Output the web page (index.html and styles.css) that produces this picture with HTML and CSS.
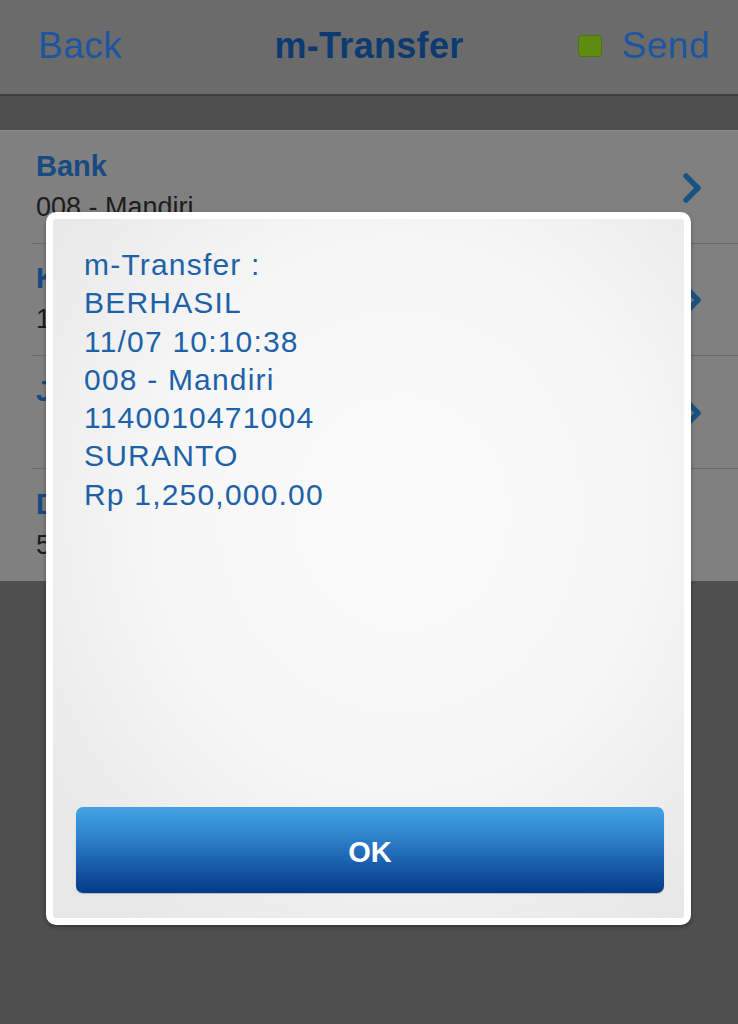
FILE: index.html
```html
<!DOCTYPE html>
<html>
<head>
<meta charset="utf-8">
<link rel="stylesheet" href="styles.css">
</head>
<body>
<div class="app">
  <header class="nav">
    <span class="nav-back">Back</span>
    <span class="nav-title">m-Transfer</span>
    <span class="nav-send"><span class="dot"></span>Send</span>
  </header>
  <div class="band"></div>
  <ul class="list">
    <li class="row">
      <div class="cell"><div class="label">Bank</div><div class="value">008 - Mandiri</div></div>
      <svg class="chev" width="24" height="32" viewBox="0 0 24 32"><polyline points="6,4 18,16 6,28" fill="none" stroke="#1b5380" stroke-width="5.5" stroke-linecap="round" stroke-linejoin="round"/></svg>
    </li>
    <li class="row">
      <div class="cell"><div class="label">Ke Rekening</div><div class="value">1140010471004</div></div>
      <svg class="chev" width="24" height="32" viewBox="0 0 24 32"><polyline points="6,4 18,16 6,28" fill="none" stroke="#1b5380" stroke-width="5.5" stroke-linecap="round" stroke-linejoin="round"/></svg>
    </li>
    <li class="row">
      <div class="cell"><div class="label">Jumlah</div><div class="value"> </div></div>
      <svg class="chev" width="24" height="32" viewBox="0 0 24 32"><polyline points="6,4 18,16 6,28" fill="none" stroke="#1b5380" stroke-width="5.5" stroke-linecap="round" stroke-linejoin="round"/></svg>
    </li>
    <li class="row last">
      <div class="cell"><div class="label">Deskripsi</div><div class="value">500</div></div>
    </li>
  </ul>
  <div class="rest"></div>
</div>

<div class="modal">
  <div class="modal-inner">
    <div class="msg">
      <div>m-Transfer :</div>
      <div>BERHASIL</div>
      <div>11/07 10:10:38</div>
      <div>008 - Mandiri</div>
      <div>1140010471004</div>
      <div>SURANTO</div>
      <div>Rp 1,250,000.00</div>
    </div>
    <button class="ok">OK</button>
  </div>
</div>
</body>
</html>
```

FILE: styles.css
```css
* { box-sizing: border-box; }
html, body {
  margin: 0;
  padding: 0;
  width: 738px;
  height: 1024px;
  overflow: hidden;
  background: #4f4f4f;
  font-family: "Liberation Sans", Arial, sans-serif;
}
.app {
  display: flex;
  flex-direction: column;
  height: 1024px;
}
.nav {
  height: 96px;
  background: #6b6b6b;
  border-bottom: 2px solid #3f3f3f;
  display: flex;
  align-items: center;
  justify-content: space-between;
  padding: 0 28px 3px 38px;
  position: relative;
}
.nav-back, .nav-send {
  color: #1d56a0;
  font-size: 37px;
  letter-spacing: 0.5px;
}
.nav-title {
  position: absolute;
  left: 0;
  right: 0;
  text-align: center;
  top: 25px;
  color: #0d3a70;
  font-size: 36px;
  font-weight: bold;
  letter-spacing: 0.3px;
  pointer-events: none;
}
.nav-send {
  display: flex;
  align-items: center;
}
.dot {
  width: 24px;
  height: 22px;
  background: #5d8c10;
  border: 1px solid #4f7210;
  border-radius: 4px;
  margin-right: 20px;
}
.band {
  height: 34px;
  background: #4f4f4f;
}
.list {
  list-style: none;
  margin: 0;
  padding: 0;
  background: #808080;
  border-top: 1px solid #8a8a8a;
}
.row {
  height: 112.5px;
  margin-left: 32px;
  border-bottom: 1px solid #6a6a6a;
  display: flex;
  align-items: center;
  justify-content: space-between;
  padding: 2px 34px 0 4px;
}
.row.last { border-bottom: none; }
.label {
  color: #174a80;
  font-size: 29px;
  font-weight: bold;
  line-height: 38px;
}
.value {
  color: #1c1c1c;
  font-size: 27px;
  line-height: 44px;
  min-height: 44px;
}
.chev { margin-top: 0; }
.rest {
  flex: 1;
  background: #4f4f4f;
}

.modal {
  position: absolute;
  left: 46px;
  top: 212px;
  width: 645px;
  height: 713px;
  background: #ffffff;
  border-radius: 10px;
  padding: 7px;
  box-shadow: 0 2px 4px rgba(0,0,0,0.35);
}
.modal-inner {
  height: 100%;
  border-radius: 3px;
  background: radial-gradient(ellipse 72% 72% at 55% 42%, #fbfbfb 0%, #f6f6f6 55%, #e7e7e7 100%);
  display: flex;
  flex-direction: column;
  justify-content: space-between;
  padding: 27px 20px 25px 23px;
}
.msg {
  padding-left: 8px;
  color: #1d62a8;
  font-size: 30px;
  line-height: 38.3px;
  letter-spacing: 1.2px;
}
.ok {
  height: 86px;
  width: 100%;
  border: none;
  border-radius: 7px;
  padding-top: 6px;
  background: linear-gradient(to bottom, #42a3e4 0%, #3187d0 30%, #1a5fae 65%, #053a86 100%);
  color: #ffffff;
  font-family: "Liberation Sans", Arial, sans-serif;
  font-size: 29px;
  font-weight: bold;
  box-shadow: 0 1px 1px rgba(0,0,0,0.2);
}
```
